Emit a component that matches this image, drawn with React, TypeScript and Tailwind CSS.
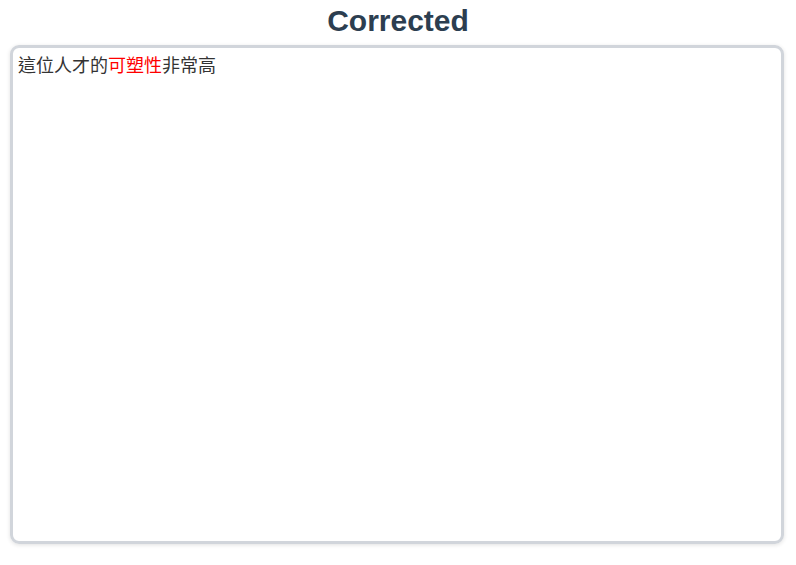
export default function App() {
  return (
    <div className="w-[796px] h-[565px] bg-white px-[10px] pt-[4px]" style={{ fontFamily: '"Liberation Sans", Arial, sans-serif' }}>
      <h2 className="text-center text-[30px] font-bold leading-[34px] text-[#2c3e50] mb-[7px]">Corrected</h2>
      <div className="h-[499px] w-[774px] rounded-[9px] border-[3px] border-[#d1d5db] shadow-[0_1px_4px_rgba(0,0,0,0.12)] px-[5px] py-[4px]">
        <div className="text-[18px] leading-[24px] text-[#333333]" style={{ fontFamily: '"Noto Sans CJK TC", "Liberation Sans", sans-serif' }}>
          這位人才的<span className="text-[#ff0000]">可塑性</span>非常高
        </div>
      </div>
    </div>
  );
}
